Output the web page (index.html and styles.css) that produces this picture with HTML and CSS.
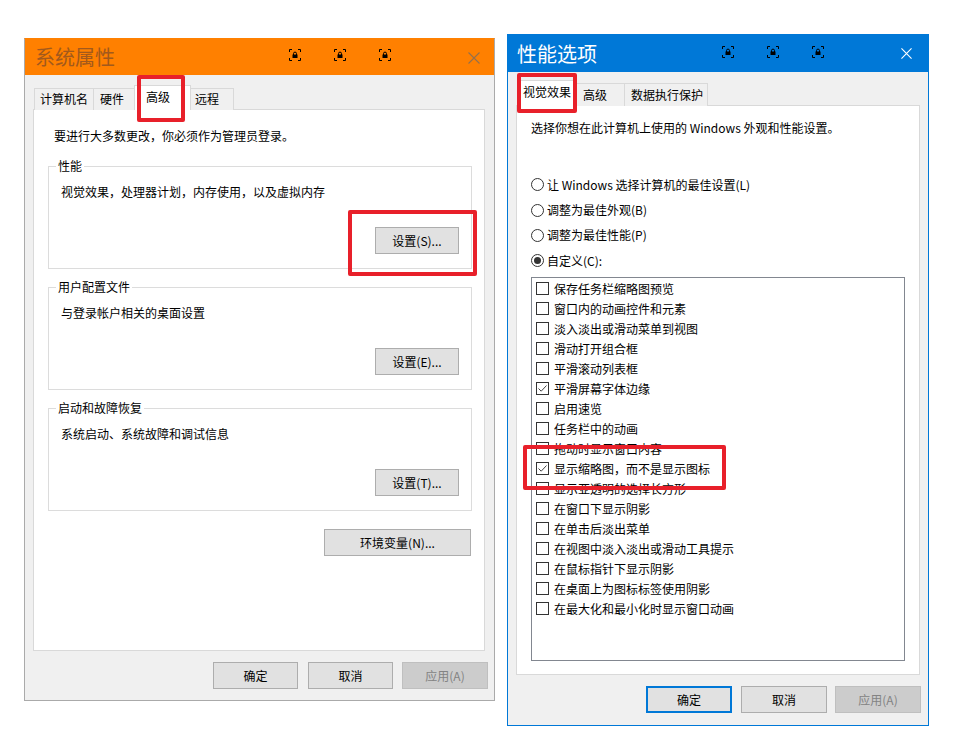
FILE: index.html
```html
<!DOCTYPE html>
<html lang="zh-CN">
<head>
<meta charset="utf-8">
<title>系统属性 / 性能选项</title>
<link rel="stylesheet" href="styles.css">
</head>
<body>
<div class="desk">

<!-- Left window -->
<section class="win win-left">
  <header class="titlebar tb-orange">
    <span class="title">系统属性</span>
    <span class="tb-icons">
      <svg class="tbi" viewBox="0 0 12 12"><path d="M0.5 3V0.5H3M9 0.5H11.5V3M11.5 9V11.5H9M3 11.5H0.5V9" fill="none" stroke="#000" stroke-width="1"/><path d="M4.5 6V4.6a1.5 1.5 0 0 1 3 0V6" fill="none" stroke="#000" stroke-width="1"/><rect x="3.5" y="5.5" width="5" height="3.5" fill="#000"/></svg>
      <svg class="tbi" viewBox="0 0 12 12"><path d="M0.5 3V0.5H3M9 0.5H11.5V3M11.5 9V11.5H9M3 11.5H0.5V9" fill="none" stroke="#000" stroke-width="1"/><path d="M4.5 6V4.6a1.5 1.5 0 0 1 3 0V6" fill="none" stroke="#000" stroke-width="1"/><rect x="3.5" y="5.5" width="5" height="3.5" fill="#000"/></svg>
      <svg class="tbi" viewBox="0 0 12 12"><path d="M0.5 3V0.5H3M9 0.5H11.5V3M11.5 9V11.5H9M3 11.5H0.5V9" fill="none" stroke="#000" stroke-width="1"/><path d="M4.5 6V4.6a1.5 1.5 0 0 1 3 0V6" fill="none" stroke="#000" stroke-width="1"/><rect x="3.5" y="5.5" width="5" height="3.5" fill="#000"/></svg>
    </span>
    <svg class="close" viewBox="0 0 12 12"><path d="M0.5 0.5L11.5 11.5M11.5 0.5L0.5 11.5" stroke="#93704e" stroke-width="1.1" fill="none"/></svg>
  </header>

  <nav class="tabs tabs-left">
    <span class="tab t-l1">计算机名</span>
    <span class="tab t-l2">硬件</span>
    <span class="tab sel t-l3">高级</span>
    <span class="tab t-l4">远程</span>
  </nav>

  <div class="panel panel-left">
    <p class="note">要进行大多数更改，你必须作为管理员登录。</p>

    <fieldset class="group">
      <legend>性能</legend>
      <p class="gdesc">视觉效果，处理器计划，内存使用，以及虚拟内存</p>
      <button class="btn gbtn">设置(S)...</button>
    </fieldset>

    <fieldset class="group">
      <legend>用户配置文件</legend>
      <p class="gdesc">与登录帐户相关的桌面设置</p>
      <button class="btn gbtn">设置(E)...</button>
    </fieldset>

    <fieldset class="group">
      <legend>启动和故障恢复</legend>
      <p class="gdesc">系统启动、系统故障和调试信息</p>
      <button class="btn gbtn">设置(T)...</button>
    </fieldset>

    <button class="btn envbtn">环境变量(N)...</button>
  </div>

  <footer class="foot foot-left">
    <button class="btn fbtn">确定</button>
    <button class="btn fbtn">取消</button>
    <button class="btn fbtn dis">应用(A)</button>
  </footer>
</section>

<!-- Right window -->
<section class="win win-right">
  <header class="titlebar tb-blue">
    <span class="title">性能选项</span>
    <span class="tb-icons">
      <svg class="tbi" viewBox="0 0 12 12"><path d="M0.5 3V0.5H3M9 0.5H11.5V3M11.5 9V11.5H9M3 11.5H0.5V9" fill="none" stroke="#000" stroke-width="1"/><path d="M4.5 6V4.6a1.5 1.5 0 0 1 3 0V6" fill="none" stroke="#000" stroke-width="1"/><rect x="3.5" y="5.5" width="5" height="3.5" fill="#000"/></svg>
      <svg class="tbi" viewBox="0 0 12 12"><path d="M0.5 3V0.5H3M9 0.5H11.5V3M11.5 9V11.5H9M3 11.5H0.5V9" fill="none" stroke="#000" stroke-width="1"/><path d="M4.5 6V4.6a1.5 1.5 0 0 1 3 0V6" fill="none" stroke="#000" stroke-width="1"/><rect x="3.5" y="5.5" width="5" height="3.5" fill="#000"/></svg>
      <svg class="tbi" viewBox="0 0 12 12"><path d="M0.5 3V0.5H3M9 0.5H11.5V3M11.5 9V11.5H9M3 11.5H0.5V9" fill="none" stroke="#000" stroke-width="1"/><path d="M4.5 6V4.6a1.5 1.5 0 0 1 3 0V6" fill="none" stroke="#000" stroke-width="1"/><rect x="3.5" y="5.5" width="5" height="3.5" fill="#000"/></svg>
    </span>
    <svg class="close close-w" viewBox="0 0 12 12"><path d="M0.5 0.5L11.5 11.5M11.5 0.5L0.5 11.5" stroke="#fff" stroke-width="1.2" fill="none"/></svg>
  </header>

  <nav class="tabs tabs-right">
    <span class="tab sel t-r1">视觉效果</span>
    <span class="tab t-r2">高级</span>
    <span class="tab t-r3">数据执行保护</span>
  </nav>

  <div class="panel panel-right">
    <p class="note2">选择你想在此计算机上使用的 Windows 外观和性能设置。</p>
    <div class="radios">
      <div class="radio"><span class="rc"></span>让 Windows 选择计算机的最佳设置(L)</div>
      <div class="radio"><span class="rc"></span>调整为最佳外观(B)</div>
      <div class="radio"><span class="rc"></span>调整为最佳性能(P)</div>
      <div class="radio"><span class="rc on"></span>自定义(C):</div>
    </div>
    <div class="list">
      <div class="item"><span class="cb"></span>保存任务栏缩略图预览</div>
      <div class="item"><span class="cb"></span>窗口内的动画控件和元素</div>
      <div class="item"><span class="cb"></span>淡入淡出或滑动菜单到视图</div>
      <div class="item"><span class="cb"></span>滑动打开组合框</div>
      <div class="item"><span class="cb"></span>平滑滚动列表框</div>
      <div class="item"><span class="cb"><svg viewBox="0 0 13 13"><path d="M2.5 6.5L5.2 9.2L10.5 3.5" fill="none" stroke="#444" stroke-width="1"/></svg></span>平滑屏幕字体边缘</div>
      <div class="item"><span class="cb"></span>启用速览</div>
      <div class="item"><span class="cb"></span>任务栏中的动画</div>
      <div class="item"><span class="cb"></span>拖动时显示窗口内容</div>
      <div class="item"><span class="cb"><svg viewBox="0 0 13 13"><path d="M2.5 6.5L5.2 9.2L10.5 3.5" fill="none" stroke="#444" stroke-width="1"/></svg></span>显示缩略图，而不是显示图标</div>
      <div class="item"><span class="cb"></span>显示亚透明的选择长方形</div>
      <div class="item"><span class="cb"></span>在窗口下显示阴影</div>
      <div class="item"><span class="cb"></span>在单击后淡出菜单</div>
      <div class="item"><span class="cb"></span>在视图中淡入淡出或滑动工具提示</div>
      <div class="item"><span class="cb"></span>在鼠标指针下显示阴影</div>
      <div class="item"><span class="cb"></span>在桌面上为图标标签使用阴影</div>
      <div class="item"><span class="cb"></span>在最大化和最小化时显示窗口动画</div>
    </div>
  </div>

  <footer class="foot foot-right">
    <button class="btn fbtn2 def">确定</button>
    <button class="btn fbtn2">取消</button>
    <button class="btn fbtn2 dis">应用(A)</button>
  </footer>
</section>

<!-- Red annotation boxes -->
<div class="mark m1"></div>
<div class="mark m2"></div>
<div class="mark m3"></div>
<div class="mark m4"></div>

</div>
</body>
</html>
```

FILE: styles.css
```css
* { box-sizing: border-box; }
html, body { margin: 0; padding: 0; background: #fff; }
body {
  font-family: "Noto Sans CJK SC", "Liberation Sans", sans-serif;
  font-size: 12px;
  line-height: 16px;
  color: #000;
}
.desk { position: relative; width: 968px; height: 756px; overflow: hidden; }

p { margin: 0; }

/* Windows */
.win {
  position: absolute;
  background: #f0f0f0;
  display: flex;
  flex-direction: column;
}
.win-left {
  left: 24px; top: 38px; width: 471px; height: 663px;
  border: 1px solid #aaaaaa;
  border-top-color: #ff8000;
}
.win-right {
  left: 507px; top: 34px; width: 422px; height: 692px;
  border: 1px solid #0078d7;
}

/* Title bars */
.titlebar {
  display: flex;
  align-items: center;
  flex: none;
}
.tb-orange { height: 36px; background: #ff8000; padding: 0 14px 0 10px; }
.tb-blue { height: 37px; background: #0078d7; padding: 0 16px 0 9px; }
.title {
  flex: 1;
  font-size: 20px;
  line-height: 24px;
}
.tb-orange .title { color: #a2591c; }
.tb-blue .title { color: #fff; }
.tb-icons { display: flex; gap: 33px; margin-right: 77px; }
.tbi { width: 12px; height: 12px; display: block; }
.tb-orange .tbi { margin-top: -4px; }
.tb-blue .tbi { margin-top: -4px; }
.close { width: 12px; height: 12px; display: block; margin-top: 1px; }
.close-w { width: 11px; height: 11px; margin-top: 0; }

/* Tabs */
.tabs {
  display: flex;
  align-items: flex-end;
  position: relative;
  z-index: 2;
  margin-bottom: -1px;
  flex: none;
}
.tab {
  display: block;
  height: 22px;
  background: #f0f0f0;
  border: 1px solid #d9d9d9;
  border-bottom: none;
  line-height: 20px;
  white-space: nowrap;
  margin-left: -1px;
}
.tab.sel {
  background: #fff;
  height: 25px;
  line-height: 21px;
  position: relative;
  z-index: 3;
}
.tabs-left { margin-top: 10px; margin-left: 9px; }
.t-l1 { width: 60px; padding-left: 5px; margin-left: 0; }
.t-l2 { width: 43px; padding-left: 6px; }
.t-l3 { width: 57px; padding-left: 11px; margin-left: -2px; margin-right: -2px; }
.t-l4 { width: 46px; padding-left: 6px; }

.tabs-right { margin-top: 8px; margin-left: 10px; }
.tab.t-r1 { width: 58px; padding-left: 4px; margin-left: 0; height: 26px; line-height: 21px; margin-right: -1px; }
.t-r2 { width: 51px; padding-left: 8px; height: 23px; line-height: 22px; }
.t-r3 { width: 84px; padding-left: 6px; height: 23px; line-height: 22px; }

/* Panels */
.panel {
  background: #fff;
  border: 1px solid #d9d9d9;
  flex: none;
  display: flex;
  flex-direction: column;
}
.panel-left { margin: 0 9px 0 8px; height: 542px; }
.panel-right { margin: 0 8px 0 8px; height: 570px; }

.note { margin: 18px 0 0 20px; }

.group {
  margin: 14px 12px 0 14px;
  padding: 0;
  border: 1px solid #dcdcdc;
  display: flex;
  flex-direction: column;
  min-width: 0;
}
.group + .group { margin-top: 10px; }
.group legend {
  margin-left: 7px;
  padding: 0 2px;
  line-height: 16px;
  color: #000;
}
.gdesc { margin: 10px 0 0 12px; }

/* Buttons */
.btn {
  font-family: inherit;
  font-size: 12px;
  line-height: 16px;
  color: #000;
  background: #e1e1e1;
  border: 1px solid #adadad;
  border-radius: 0;
  padding: 0;
  height: 27px;
  display: block;
}
.gbtn {
  width: 84px;
  align-self: flex-end;
  margin: 27px 12px 14px 0;
}
.envbtn {
  width: 147px;
  align-self: flex-end;
  margin: 18px 13px 0 0;
}
.foot {
  display: flex;
  justify-content: flex-end;
  flex: none;
}
.foot-left { margin: 11px 6px 0 0; gap: 10px; }
.fbtn { width: 85px; }
.fbtn:last-child { width: 86px; margin-left: -1px; }
.btn.dis { background: #cccccc; border-color: #bfbfbf; color: #838383; }

.foot-right { margin: 11px 7px 0 0; gap: 9px; }
.fbtn2 { width: 86px; }
.fbtn2:last-child { margin-left: -1px; }
.btn.def { border: 2px solid #0078d7; }

/* Right panel content */
.note2 { margin: 14px 0 0 14px; }
.radios { margin: 36px 0 0 14px; display: flex; flex-direction: column; }
.radio {
  display: flex;
  align-items: center;
  height: 25.4px;
  gap: 3px;
}
.rc {
  width: 13px; height: 13px;
  border: 1px solid #333;
  border-radius: 50%;
  background: #fff;
  position: relative;
  flex: none;
}
.rc.on::after {
  content: "";
  position: absolute;
  left: 2px; top: 2px;
  width: 7px; height: 7px;
  border-radius: 50%;
  background: #333;
}

.list {
  margin: 3px 0 0 14px;
  width: 374px;
  height: 384px;
  border: 1px solid #828790;
  padding: 1px 0 0 4px;
}
.item {
  display: flex;
  align-items: center;
  height: 20px;
  gap: 5px;
  white-space: nowrap;
}
.cb {
  width: 13px; height: 13px;
  border: 1px solid #333;
  background: #fff;
  flex: none;
  display: block;
}
.cb svg { display: block; width: 13px; height: 13px; margin: -1px 0 0 -1px; }

/* Red annotation marks */
.mark {
  position: absolute;
  border: 4px solid #e8202a;
  border-radius: 2px;
  z-index: 10;
}
.m1 { left: 137px; top: 75px; width: 48px; height: 47px; }
.m2 { left: 348px; top: 210px; width: 129px; height: 66px; }
.m3 { left: 517px; top: 73px; width: 60px; height: 40px; }
.m4 { left: 523px; top: 445px; width: 203px; height: 45px; }
```
